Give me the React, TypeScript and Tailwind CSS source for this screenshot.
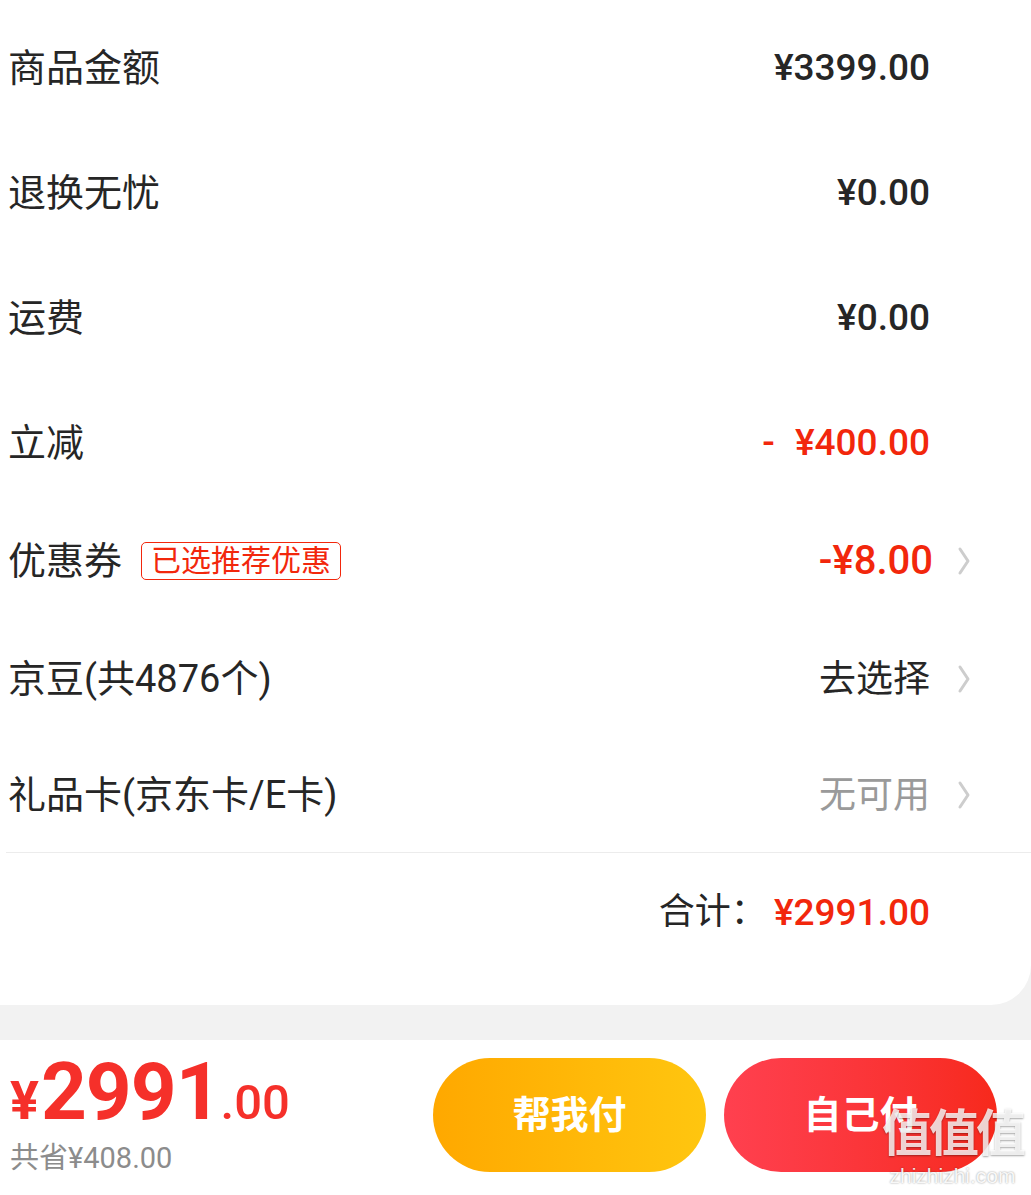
import React from 'react';

const cjk = "font-['Roboto','Noto_Sans_CJK_SC',sans-serif]";

function Chevron() {
  return (
    <svg width="14" height="30" viewBox="0 0 14 30" fill="none" className="block">
      <polyline
        points="3,3 11,15 3,27"
        stroke="#cdcdcd"
        strokeWidth="3"
        strokeLinecap="round"
        strokeLinejoin="round"
      />
    </svg>
  );
}

type Row = {
  label: string;
  value: React.ReactNode;
  tone: 'dark' | 'red' | 'redBig' | 'grey' | 'plain';
  arrow?: boolean;
  tag?: string;
  height: string;
};

const rows: Row[] = [
  { label: '商品金额', value: '¥3399.00', tone: 'dark', height: 'h-[125px]' },
  { label: '退换无忧', value: '¥0.00', tone: 'dark', height: 'h-[125px]' },
  { label: '运费', value: '¥0.00', tone: 'dark', height: 'h-[125px]' },
  {
    label: '立减',
    value: (
      <>
        -<span className="ml-[20px]">¥400.00</span>
      </>
    ),
    tone: 'red',
    height: 'h-[125px]'
  },
  { label: '优惠券', value: '-¥8.00', tone: 'redBig', arrow: true, tag: '已选推荐优惠', height: 'h-[112px]' },
  { label: '京豆(共4876个)', value: '去选择', tone: 'plain', arrow: true, height: 'h-[124px]' },
  { label: '礼品卡(京东卡/E卡)', value: '无可用', tone: 'grey', arrow: true, height: 'h-[108px]' }
];

function valueClass(tone: Row['tone']) {
  if (tone === 'red') return 'text-[#f2270c] font-medium text-[37px]';
  if (tone === 'redBig') return 'text-[#f2270c] font-medium text-[40px] mr-[-3px]';
  if (tone === 'grey') return 'text-[#9a9a9a] text-[37px]';
  if (tone === 'plain') return 'text-[#262626] text-[37px]';
  return 'text-[#262626] font-medium text-[37px]';
}

export default function App() {
  return (
    <div className={`relative w-[1031px] h-[1195px] overflow-hidden bg-[#f2f2f2] ${cjk}`}>
      <div className="bg-white rounded-br-[40px] pt-[5px] pb-[34px]">
        {rows.map((row) => (
          <div key={row.label} className={`flex items-center justify-between pl-[8px] pr-[60px] ${row.height}`}>
            <div className="flex items-center">
              <span className="text-[38px] leading-none text-[#262626]">{row.label}</span>
              {row.tag ? (
                <span className="ml-[19px] rounded-[5px] border border-[#f2270c] px-[9px] h-[38px] flex items-center text-[30px] leading-none text-[#f2270c]">
                  {row.tag}
                </span>
              ) : null}
            </div>
            <div className="flex items-center">
              <span className={`leading-none ${valueClass(row.tone)}`}>{row.value}</span>
              <div className="w-[41px] flex justify-end">{row.arrow ? <Chevron /> : null}</div>
            </div>
          </div>
        ))}
        <div className="mt-[3px] ml-[6px] h-px bg-[#ececec]" />
        <div className="flex items-center justify-end h-[118px] pr-[101px]">
          <span className="text-[36px] leading-none text-[#262626]">合计：</span>
          <span className="ml-[7px] text-[37px] leading-none font-medium text-[#f2270c]">¥2991.00</span>
        </div>
      </div>

      <div className="mt-[35px] h-[155px] bg-white flex items-start">
        <div className="pl-[10px] pt-[12px] w-[433px]">
          <div className="flex items-baseline text-[#f5302a] font-bold leading-none">
            <span className="text-[54px]">¥</span>
            <span className="ml-[2px] text-[80px] tracking-[-1px]">2991</span>
            <span className="text-[49px] font-medium">.00</span>
          </div>
          <div className="mt-[12px] text-[29px] leading-none text-[#8c8c8c]">共省¥408.00</div>
        </div>
        <div className="pt-[18px] flex gap-[18px]">
          <button className="w-[273px] h-[114px] rounded-full bg-gradient-to-r from-[#ffa800] to-[#ffc60f] text-white text-[38px] font-bold flex items-center justify-center">
            帮我付
          </button>
          <button className="w-[273px] h-[114px] rounded-full bg-gradient-to-r from-[#ff404f] to-[#f7291b] text-white text-[38px] font-bold flex items-center justify-center">
            自己付
          </button>
        </div>
      </div>

      <div className="absolute right-[8px] bottom-[9px] flex flex-col items-center pointer-events-none">
        <span className="text-[50px] leading-none font-bold text-white/80 tracking-[-3px] [text-shadow:0_1px_2px_rgba(0,0,0,0.35)]">
          值值值
        </span>
        <span className="mt-[6px] text-[21px] leading-none text-white/90 font-['Liberation_Sans',sans-serif] [text-shadow:0_0_2px_rgba(0,0,0,0.45)]">
          zhizhizhi.com
        </span>
      </div>
    </div>
  );
}
